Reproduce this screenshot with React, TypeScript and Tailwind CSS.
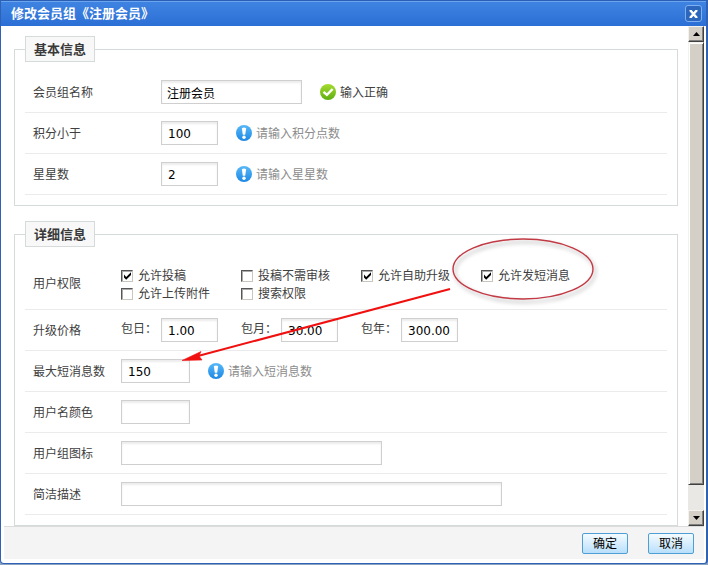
import type { ReactNode } from "react";

const inputBase =
  "h-6 border border-[#cfcfcf] bg-white text-xs text-black outline-none shadow-[inset_0_2px_2px_#ececec]";
const numeric = "px-1.5 pt-0.5 font-['DejaVu_Sans',sans-serif]";

function Row({ label, htmlFor, labelWidth, children }: { label: string; htmlFor?: string; labelWidth: string; children: ReactNode }) {
  return (
    <div className="flex items-center border-b border-[#ebebeb] py-2 pl-2">
      {htmlFor ? (
        <label htmlFor={htmlFor} className={`${labelWidth} shrink-0`}>{label}</label>
      ) : (
        <span className={`${labelWidth} shrink-0`}>{label}</span>
      )}
      {children}
    </div>
  );
}

function Group({ title, children }: { title: string; children: ReactNode }) {
  return (
    <fieldset className="border border-[#d5dbdb] px-2.5 pb-2.5">
      <legend className="mb-2.5 flex h-[26px] items-center border border-[#d5dada] bg-[#f8f8f8] px-2 text-[13px] font-bold text-[#3a3a3a]">
        {title}
      </legend>
      {children}
    </fieldset>
  );
}

function InfoIcon() {
  return (
    <svg viewBox="0 0 16 16" className="size-4 shrink-0" aria-hidden="true">
      <defs>
        <linearGradient id="info" x1="0" y1="0" x2="0" y2="1">
          <stop offset="0" stopColor="#58b8f8" />
          <stop offset="1" stopColor="#1c88e4" />
        </linearGradient>
      </defs>
      <circle cx="8" cy="8" r="8" fill="url(#info)" />
      <path d="M5.800 3.200Q8 1.800 10.200 3.200L9.200 9.800H6.800z" fill="#fff" />
      <circle cx="8" cy="12.200" r="1.700" fill="#fff" />
    </svg>
  );
}

function CheckIcon() {
  return (
    <svg viewBox="0 0 16 16" className="size-4 shrink-0" aria-hidden="true">
      <defs>
        <linearGradient id="ok" x1="0" y1="0" x2="0" y2="1">
          <stop offset="0" stopColor="#a6dc30" />
          <stop offset="1" stopColor="#5cae10" />
        </linearGradient>
      </defs>
      <circle cx="8" cy="8" r="8" fill="url(#ok)" />
      <path d="M3.500 7.800l3.400 3.100 5.700-5.900" fill="none" stroke="#fff" strokeWidth="2.4" />
    </svg>
  );
}

function Hint({ text }: { text: string }) {
  return (
    <span className="ml-[18px] flex items-center gap-1 text-[#8c8c8c]">
      <InfoIcon />
      {text}
    </span>
  );
}

function Permission({ label, checked }: { label: string; checked?: boolean }) {
  return (
    <label className="flex h-[18px] w-[120px] items-center gap-[5px] pt-0.5 whitespace-nowrap">
      <span className="mt-0.5 grid size-3 shrink-0">
        <input
          type="checkbox"
          defaultChecked={checked}
          className="peer col-start-1 row-start-1 size-3 appearance-none border border-t-[#555] border-r-[#c9c6bf] border-b-[#c9c6bf] border-l-[#555] bg-white shadow-[inset_1px_1px_0_#aaa]"
        />
        <svg viewBox="0 0 12 12" className="pointer-events-none invisible col-start-1 row-start-1 size-3 peer-checked:visible" aria-hidden="true">
          <path d="M3 4.600v3l2.200 2.200 4.800-4.800V2.200L5.200 7z" fill="#000" />
        </svg>
      </span>
      {label}
    </label>
  );
}

function Price({ id, label, value }: { id: string; label: string; value: string }) {
  return (
    <div className="flex w-[120px] items-center">
      <label htmlFor={id} className="w-10 shrink-0 pb-1">{label}</label>
      <input id={id} defaultValue={value} className={`${inputBase} ${numeric} w-[57px]`} />
    </div>
  );
}

function ScrollButton({ down }: { down?: boolean }) {
  return (
    <button
      type="button"
      aria-label={down ? "向下滚动" : "向上滚动"}
      className="flex h-4 shrink-0 items-center justify-center border border-t-[#f4f2ee] border-r-[#404040] border-b-[#404040] border-l-[#f4f2ee] bg-[#d4d0c8] shadow-[inset_-1px_-1px_0_#808080]"
    >
      <svg viewBox="0 0 7 4" className="h-1 w-[7px]" aria-hidden="true">
        <path d={down ? "M0 0h7L3.5 4z" : "M0 4h7L3.5 0z"} fill="#000" />
      </svg>
    </button>
  );
}

function Annotations() {
  return (
    <svg viewBox="0 0 500 150" className="pointer-events-none absolute top-2.5 left-[156px] h-[150px] w-[500px]" aria-hidden="true">
      <defs>
        <filter id="soft" x="-10%" y="-10%" width="120%" height="130%">
          <feDropShadow dx="2" dy="3" stdDeviation="2" floodColor="#000" floodOpacity="0.35" />
        </filter>
      </defs>
      <ellipse cx="353" cy="38" rx="70" ry="30" fill="none" stroke="#c03a44" strokeWidth="1.4" filter="url(#soft)" />
      <path d="M280 58L28 125" stroke="#f01010" strokeWidth="2" />
      <path d="M12 129.500L31 120.500L29 125L32 129z" fill="#f01010" stroke="#f01010" strokeWidth="0.6" />
    </svg>
  );
}

const dialogButton =
  "h-[21px] w-[46px] rounded-[2px] border border-[#4f9fd6] bg-linear-to-b from-[#f5fbff] to-[#b9dffb] text-xs leading-none text-black";

export default function App() {
  return (
    <div className="bg-[#8aa3c4] pb-px font-['Noto_Sans_CJK_SC',sans-serif] text-xs leading-[18px] text-[#404040]">
      <div role="dialog" aria-labelledby="title" className="rounded-b border-r-2 border-b border-l border-[#2f62b5] bg-white">
        <header className="flex h-[26px] items-center justify-between border-t border-[#2a5fb5] bg-linear-to-b from-[#4084e2] to-[#2b6fd6] pr-1 pl-2.5 shadow-[inset_0_1px_0_#6ba5ee]">
          <h1 id="title" className="pb-0.5 text-[13px] font-bold text-white">修改会员组《注册会员》</h1>
          <button type="button" aria-label="关闭" className="flex size-[17px] items-center justify-center rounded-[3px] border border-[#7fb0f0] bg-[#2c66bd]">
            <svg viewBox="0 0 9 8" className="h-2 w-[9px]" aria-hidden="true">
              <path d="M1 0l7 8M8 0L1 8" stroke="#fff" strokeWidth="2.4" />
            </svg>
          </button>
        </header>
        <div className="flex pr-0.5">
          <main className="min-w-0 flex-1 space-y-[15px] pt-2.5 pr-2.5 pl-[13px]">
            <Group title="基本信息">
              <Row label="会员组名称" htmlFor="name" labelWidth="w-32">
                <input id="name" defaultValue="注册会员" className={`${inputBase} w-[141px] px-[5px]`} />
                <span className="ml-[18px] flex items-center gap-1">
                  <CheckIcon />
                  输入正确
                </span>
              </Row>
              <Row label="积分小于" htmlFor="points" labelWidth="w-32">
                <input id="points" defaultValue="100" className={`${inputBase} ${numeric} w-[57px]`} />
                <Hint text="请输入积分点数" />
              </Row>
              <Row label="星星数" htmlFor="stars" labelWidth="w-32">
                <input id="stars" defaultValue="2" className={`${inputBase} ${numeric} w-[57px]`} />
                <Hint text="请输入星星数" />
              </Row>
            </Group>
            <div className="relative">
              <Group title="详细信息">
                <Row label="用户权限" labelWidth="w-[88px]">
                  <div className="flex w-[480px] flex-wrap">
                    <Permission label="允许投稿" checked />
                    <Permission label="投稿不需审核" />
                    <Permission label="允许自助升级" checked />
                    <Permission label="允许发短消息" checked />
                    <Permission label="允许上传附件" />
                    <Permission label="搜索权限" />
                  </div>
                </Row>
                <Row label="升级价格" labelWidth="w-[88px]">
                  <Price id="day" label="包日：" value="1.00" />
                  <Price id="month" label="包月：" value="30.00" />
                  <Price id="year" label="包年：" value="300.00" />
                </Row>
                <Row label="最大短消息数" htmlFor="messages" labelWidth="w-[88px]">
                  <input id="messages" defaultValue="150" className={`${inputBase} ${numeric} w-[69px]`} />
                  <Hint text="请输入短消息数" />
                </Row>
                <Row label="用户名颜色" htmlFor="color" labelWidth="w-[88px]">
                  <input id="color" className={`${inputBase} ${numeric} w-[69px]`} />
                </Row>
                <Row label="用户组图标" htmlFor="icon" labelWidth="w-[88px]">
                  <input id="icon" className={`${inputBase} ${numeric} w-[261px]`} />
                </Row>
                <Row label="简洁描述" htmlFor="description" labelWidth="w-[88px]">
                  <input id="description" className={`${inputBase} ${numeric} w-[381px]`} />
                </Row>
              </Group>
              <Annotations />
            </div>
          </main>
          <div className="flex w-4 shrink-0 flex-col bg-[#eae8e4]">
            <ScrollButton />
            <div className="flex-1 border border-t-[#f4f2ee] border-r-[#404040] border-b-[#404040] border-l-[#f4f2ee] bg-[#d4d0c8] shadow-[inset_1px_1px_0_#fff,inset_-1px_-1px_0_#808080]" />
            <div className="h-[25px]" />
            <ScrollButton down />
          </div>
        </div>
        <footer className="mr-0.5 mb-1 ml-[3px] flex h-[33px] items-center justify-end gap-5 border-t border-[#dcdcdc] bg-[#f4f4f4] pr-2.5">
          <button type="button" className={dialogButton}>确定</button>
          <button type="button" className={dialogButton}>取消</button>
        </footer>
      </div>
    </div>
  );
}
